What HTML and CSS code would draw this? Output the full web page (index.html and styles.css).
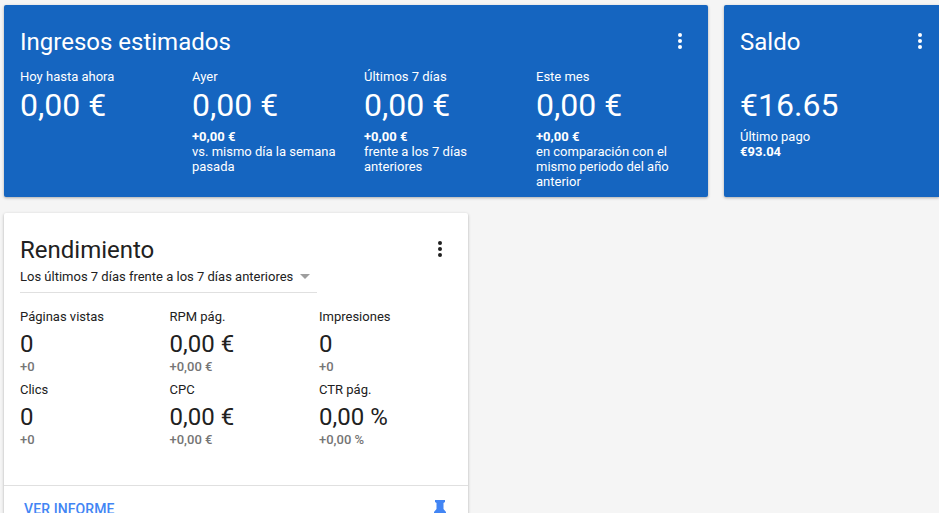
FILE: index.html
```html
<!DOCTYPE html>
<html lang="es">
  <head>
    <meta charset="UTF-8" />
    <meta name="viewport" content="width=device-width, initial-scale=1.0" />
    <title>Inicio</title>
    <link rel="stylesheet" href="styles.css">
  </head>
  <body>
    <div class="top-row">
      <section class="card blue earnings">
        <div class="card-head">
          <h2>Ingresos estimados</h2>
          <svg class="more" width="24" height="24" viewBox="0 0 24 24"><circle cx="12" cy="6" r="2"/><circle cx="12" cy="12" r="2"/><circle cx="12" cy="18" r="2"/></svg>
        </div>
        <div class="earn-cols">
          <div class="earn-col">
            <div class="label">Hoy hasta ahora</div>
            <div class="big">0,00 €</div>
          </div>
          <div class="earn-col">
            <div class="label">Ayer</div>
            <div class="big">0,00 €</div>
            <div class="note"><b>+0,00 €</b><br>vs. mismo día la semana pasada</div>
          </div>
          <div class="earn-col">
            <div class="label">Últimos 7 días</div>
            <div class="big">0,00 €</div>
            <div class="note"><b>+0,00 €</b><br>frente a los 7 días anteriores</div>
          </div>
          <div class="earn-col">
            <div class="label">Este mes</div>
            <div class="big">0,00 €</div>
            <div class="note"><b>+0,00 €</b><br>en comparación con el mismo periodo del año anterior</div>
          </div>
        </div>
      </section>

      <section class="card blue balance">
        <div class="card-head">
          <h2>Saldo</h2>
          <svg class="more" width="24" height="24" viewBox="0 0 24 24"><circle cx="12" cy="6" r="2"/><circle cx="12" cy="12" r="2"/><circle cx="12" cy="18" r="2"/></svg>
        </div>
        <div class="label label-empty">&nbsp;</div>
        <div class="big">€16.65</div>
        <div class="note">Último pago<br><b>€93.04</b></div>
      </section>
    </div>

    <section class="card perf">
      <div class="perf-body">
        <div class="card-head">
          <h2>Rendimiento</h2>
          <svg class="more" width="24" height="24" viewBox="0 0 24 24"><circle cx="12" cy="6" r="2"/><circle cx="12" cy="12" r="2"/><circle cx="12" cy="18" r="2"/></svg>
        </div>
        <div class="range">
          <span>Los últimos 7 días frente a los 7 días anteriores</span>
          <span class="arrow"></span>
        </div>
        <div class="metrics">
          <div class="metric">
            <div class="m-label">Páginas vistas</div>
            <div class="m-value">0</div>
            <div class="m-delta">+0</div>
          </div>
          <div class="metric">
            <div class="m-label">RPM pág.</div>
            <div class="m-value">0,00 €</div>
            <div class="m-delta">+0,00 €</div>
          </div>
          <div class="metric">
            <div class="m-label">Impresiones</div>
            <div class="m-value">0</div>
            <div class="m-delta">+0</div>
          </div>
          <div class="metric">
            <div class="m-label">Clics</div>
            <div class="m-value">0</div>
            <div class="m-delta">+0</div>
          </div>
          <div class="metric">
            <div class="m-label">CPC</div>
            <div class="m-value">0,00 €</div>
            <div class="m-delta">+0,00 €</div>
          </div>
          <div class="metric">
            <div class="m-label">CTR pág.</div>
            <div class="m-value">0,00 %</div>
            <div class="m-delta">+0,00 %</div>
          </div>
        </div>
      </div>
      <div class="perf-foot">
        <a class="report-link">VER INFORME</a>
        <svg class="pin" width="14" height="20" viewBox="0 0 14 20"><path d="M2 0h10v2l-1.5 1v6l2.500 3v2H1v-2l2.500-3V3L2 2z"/></svg>
      </div>
    </section>
  </body>
</html>
```

FILE: styles.css
```css
html,
body {
  height: 513px;
  overflow: hidden;
}

body {
  margin: 0;
  padding: 5px 0 0 4px;
  box-sizing: border-box;
  width: 939px;
  background-color: #f5f5f5;
  font-family: Roboto, Arial, sans-serif;
  font-size: 13px;
  color: #212121;
}

h2 {
  margin: 0;
  padding-top: 2px;
  font-size: 24px;
  font-weight: 400;
  line-height: 32px;
}

.top-row {
  display: flex;
  gap: 16px;
}

.card {
  border-radius: 2px;
  box-shadow: 0 1px 3px rgba(0, 0, 0, 0.3);
}

.blue {
  background-color: #1565c0;
  color: white;
}

.earnings {
  flex: none;
  width: 704px;
  height: 192px;
  box-sizing: border-box;
  padding: 20px 16px 0;
}

.balance {
  flex: 1;
  height: 192px;
  box-sizing: border-box;
  padding: 20px 0 0 16px;
  border-radius: 2px 0 0 2px;
}

.card-head {
  display: flex;
  justify-content: space-between;
  align-items: center;
  height: 32px;
}

.more {
  fill: white;
  flex: none;
}

.balance .card-head {
  width: 192px;
}

.earn-cols {
  display: flex;
  margin-top: 11px;
}

.earn-col {
  flex: none;
  width: 172px;
  box-sizing: border-box;
  padding-right: 16px;
}

.label {
  font-size: 13px;
  line-height: 18px;
}

.label-empty {
  margin-top: 11px;
}

.big {
  font-size: 32px;
  line-height: 40px;
  margin-top: -1px;
}

.note {
  font-size: 13px;
  line-height: 15px;
  margin-top: 4px;
}

.note b {
  font-weight: 700;
}

.perf {
  width: 464px;
  height: 320px;
  margin-top: 16px;
  background-color: white;
}

.perf .more {
  fill: #212121;
}

.perf-body {
  height: 272px;
  box-sizing: border-box;
  padding: 20px 16px 0;
}

.range {
  display: flex;
  align-items: center;
  width: 297px;
  height: 28px;
  padding-bottom: 4px;
  border-bottom: 1px solid #e0e0e0;
  box-sizing: border-box;
}

.arrow {
  width: 0;
  height: 0;
  margin-left: 7px;
  border-left: 5px solid transparent;
  border-right: 5px solid transparent;
  border-top: 5px solid #9e9e9e;
}

.metrics {
  display: grid;
  grid-template-columns: repeat(3, 149.500px);
  grid-auto-rows: 73px;
  margin-top: 15px;
}

.m-label {
  line-height: 18px;
}

.m-value {
  font-size: 24px;
  line-height: 32px;
  margin-top: 2px;
}

.m-delta {
  font-size: 13px;
  font-weight: 500;
  line-height: 14px;
  color: #757575;
}

.perf-foot {
  display: flex;
  justify-content: space-between;
  border-top: 1px solid #e0e0e0;
  padding: 15px 21px 0 20px;
}

.report-link {
  font-size: 14px;
  font-weight: 500;
  letter-spacing: 0.1px;
  color: #4285f4;
}

.pin {
  fill: #4285f4;
  margin-top: -1px;
}
```
